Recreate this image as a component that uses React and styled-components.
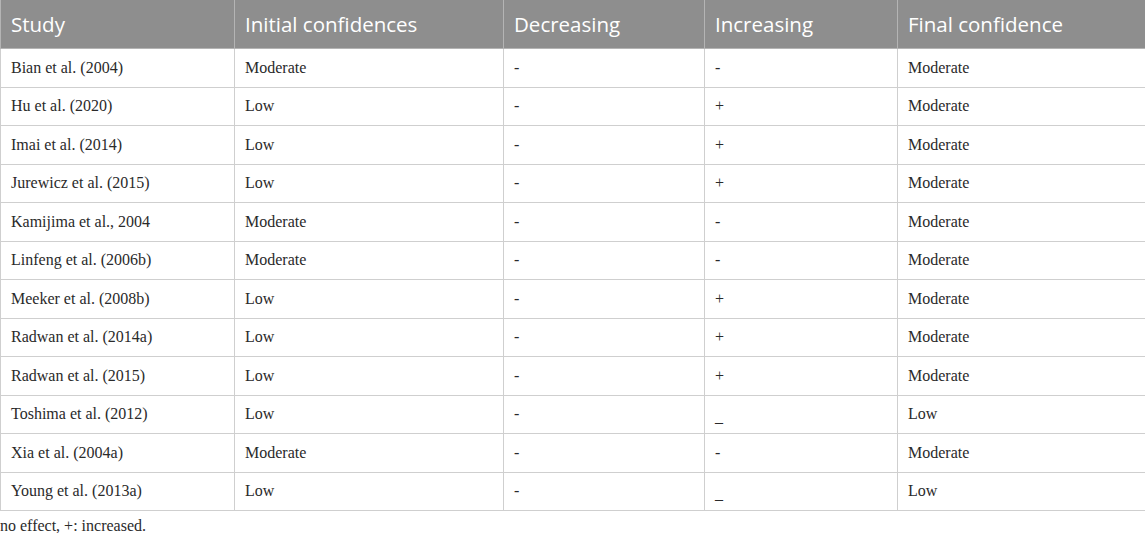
import React from "react";
import styled, { createGlobalStyle } from "styled-components";

const Global = createGlobalStyle`
  body {
    margin: 0;
    background: #fff;
  }
`;

const Wrap = styled.div`
  width: 1145px;
`;

const Table = styled.table`
  width: 1145px;
  border-collapse: collapse;
  table-layout: fixed;
`;

const Th = styled.th`
  height: 48px;
  padding: 0 0 0 10px;
  background: #8e8e8e;
  color: #fff;
  font-family: "Open Sans", "Noto Sans", sans-serif;
  font-size: 20.5px;
  font-weight: 400;
  text-align: left;
  border: 1px solid #b4b4b4;
  border-top: none;
`;

const Td = styled.td`
  height: 37.5px;
  padding: 0 0 0 10px;
  font-family: "Liberation Serif", "Times New Roman", serif;
  font-size: 16px;
  color: #2a2a2a;
  border: 1px solid #cfcfcf;
  vertical-align: middle;
  white-space: nowrap;
`;

const Mark = styled.span`
  display: inline-block;
  transform: translateY(${(p) => (p.$low ? "3px" : "0")});
`;

const Note = styled.p`
  margin: 6px 0 0 0;
  font-family: "Liberation Serif", "Times New Roman", serif;
  font-size: 16px;
  line-height: 18px;
  color: #2a2a2a;
`;

const cols = ["Study", "Initial confidences", "Decreasing", "Increasing", "Final confidence"];
const widths = [234, 269, 201, 193, 248];

const rows = [
  ["Bian et al. (2004)", "Moderate", "-", "-", "Moderate"],
  ["Hu et al. (2020)", "Low", "-", "+", "Moderate"],
  ["Imai et al. (2014)", "Low", "-", "+", "Moderate"],
  ["Jurewicz et al. (2015)", "Low", "-", "+", "Moderate"],
  ["Kamijima et al., 2004", "Moderate", "-", "-", "Moderate"],
  ["Linfeng et al. (2006b)", "Moderate", "-", "-", "Moderate"],
  ["Meeker et al. (2008b)", "Low", "-", "+", "Moderate"],
  ["Radwan et al. (2014a)", "Low", "-", "+", "Moderate"],
  ["Radwan et al. (2015)", "Low", "-", "+", "Moderate"],
  ["Toshima et al. (2012)", "Low", "-", "_", "Low"],
  ["Xia et al. (2004a)", "Moderate", "-", "-", "Moderate"],
  ["Young et al. (2013a)", "Low", "-", "_", "Low"],
];

export default function App() {
  return (
    <Wrap>
      <Global />
      <Table>
        <colgroup>
          {widths.map((w, i) => (
            <col key={i} style={{ width: w }} />
          ))}
        </colgroup>
        <thead>
          <tr>
            {cols.map((c) => (
              <Th key={c}>{c}</Th>
            ))}
          </tr>
        </thead>
        <tbody>
          {rows.map((r) => (
            <tr key={r[0]}>
              {r.map((v, i) => (
                <Td key={i}>
                  {i === 3 && v === "_" ? <Mark $low>_</Mark> : v}
                </Td>
              ))}
            </tr>
          ))}
        </tbody>
      </Table>
      <Note>no effect, +: increased.</Note>
    </Wrap>
  );
}
